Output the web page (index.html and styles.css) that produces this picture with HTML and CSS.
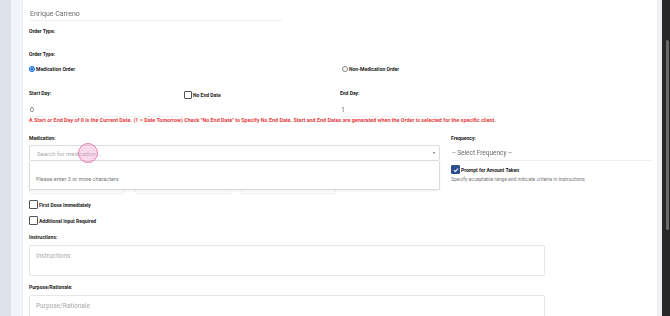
FILE: index.html
```html
<!DOCTYPE html>
<html lang="en">
<head>
  <meta charset="UTF-8">
  <meta name="viewport" content="width=device-width, initial-scale=1.0">
  <title>New Order</title>
  <link rel="stylesheet" href="styles.css">
</head>
<body>
  <div class="layout">
    <div class="sidebar"></div>
    <div class="gutter"></div>

    <div class="panel">
      <p class="label cut">Client Name:</p>
      <div class="line-input client">Enrique Carreno</div>

      <p class="label order-1">Order Type:</p>
      <p class="label order-2">Order Type:</p>

      <div class="half-grid radios">
        <label class="radio-item"><span class="radio on"></span>Medication Order</label>
        <label class="radio-item"><span class="radio"></span>Non-Medication Order</label>
      </div>

      <div class="half-grid days">
        <div class="day-start">
          <div>
            <p class="label">Start Day:</p>
            <div class="line-input day">0</div>
          </div>
          <label class="check-item no-end"><span class="box"></span>No End Date</label>
        </div>
        <div>
          <p class="label">End Day:</p>
          <div class="line-input day end">1</div>
        </div>
      </div>

      <p class="warning">A Start or End Day of 0 is the Current Date. (1 = Date Tomorrow) Check "No End Date" to Specify No End Date. Start and End Dates are generated when the Order is selected for the specific client.</p>

      <div class="med-grid">
        <div>
          <p class="label">Medication:</p>
          <div class="select-wrap">
            <div class="select">
              <span>Search for medication...</span>
              <span class="caret"></span>
            </div>
            <div class="menu">Please enter 3 or more characters</div>
            <span class="cursor"></span>
          </div>
          <div class="behind">
            <span></span><span></span><span></span>
          </div>
        </div>
        <div>
          <p class="label">Frequency:</p>
          <div class="line-input freq">-- Select Frequency --</div>
          <label class="check-item prompt"><span class="box checked">
            <svg viewBox="0 0 10 10" width="6" height="6"><path d="M1.5 5.2 L4 7.5 L8.5 2.5" fill="none" stroke="#fff" stroke-width="1.8"/></svg>
          </span>Prompt for Amount Taken</label>
          <p class="hint">Specify acceptable range and indicate criteria in Instructions</p>
        </div>
      </div>

      <label class="check-item first-dose"><span class="box"></span>First Dose Immediately</label>
      <label class="check-item extra"><span class="box"></span>Additional Input Required</label>

      <p class="label instr">Instructions:</p>
      <div class="textarea">Instructions</div>

      <p class="label purpose">Purpose/Rationale:</p>
      <div class="textarea">Purpose/Rationale</div>
    </div>

    <div class="edge"></div>
    <div class="scroll-track"><div class="thumb"></div></div>
  </div>
</body>
</html>
```

FILE: styles.css
```css
html, body {
  margin: 0;
  height: 316px;
  overflow: hidden;
}
body {
  font-family: Roboto, "Liberation Sans", Arial, sans-serif;
  color: #222;
}
p {
  margin: 0;
}
.layout {
  display: grid;
  grid-template-columns: 11px 11px 635px 5px 8px;
  width: 670px;
  height: 316px;
}
.sidebar {
  background: #dde1ea;
}
.gutter {
  background: #f4f5fa;
}
.panel {
  min-width: 0;
  overflow: hidden;
  position: relative;
  background: #fff;
  border-left: 1px solid #eceef4;
  padding: 0 0 0 6px;
}
.edge {
  background: #eef0f6;
}
.scroll-track {
  background: #262626;
  position: relative;
}
.thumb {
  position: absolute;
  top: 40px;
  left: 4px;
  width: 3px;
  height: 190px;
  background: #6a6a6a;
  border-radius: 2px;
}

.label {
  font-size: 5px;
  font-weight: 700;
  line-height: 8px;
  color: #222;
}
.label.cut {
  margin-top: -6px;
}
.line-input {
  font-size: 7px;
  color: #6a6a6a;
  line-height: 10px;
  border-bottom: 1px solid #eef0f3;
  filter: grayscale(1);
}
.line-input.client {
  width: 252px;
  padding: 7px 0 1px 1px;
}
.line-input.day {
  padding: 8px 0 1px 1px;
}
.order-1 {
  margin-top: 6px;
}
.order-2 {
  margin-top: 15px;
}

.half-grid {
  display: grid;
  grid-template-columns: 311px 312px;
}
.radios {
  margin-top: 7px;
  font-size: 5px;
  font-weight: 700;
  line-height: 8px;
}
.radio-item {
  display: flex;
  align-items: center;
  gap: 1px;
}
.radios .radio-item + .radio-item {
  margin-left: 2px;
}
.radio {
  width: 4px;
  height: 4px;
  border: 1px solid #888;
  border-radius: 50%;
  background: #fff;
}
.radio.on {
  border-color: #1a73e8;
  background: #1a73e8;
  box-shadow: inset 0 0 0 0.5px #fff;
}

.days {
  margin-top: 16px;
}
.day-start {
  display: grid;
  grid-template-columns: 155px 156px;
}
.line-input.end {
  width: 154px;
}

.check-item {
  display: flex;
  align-items: center;
  gap: 1px;
  font-size: 5px;
  font-weight: 700;
  line-height: 8px;
}
.box {
  width: 6px;
  height: 6px;
  border: 1px solid #555;
  border-radius: 1px;
  background: #fff;
  display: flex;
  align-items: center;
  justify-content: center;
}
.box.checked {
  background: #2d4f8f;
  border-color: #2d4f8f;
}
.no-end {
  align-self: start;
  margin-top: 2px;
}

.warning {
  margin-top: 0;
  font-size: 5.4px;
  font-weight: 700;
  line-height: 7px;
  color: #e53e3e;
  white-space: nowrap;
}

.med-grid {
  display: grid;
  grid-template-columns: 411px 201px;
  gap: 11px;
  margin-top: 10px;
}
.select-wrap {
  position: relative;
  margin-top: 3px;
  z-index: 2;
}
.select {
  height: 14px;
  border: 1px solid #d9dbe0;
  border-radius: 2px;
  display: flex;
  align-items: center;
  justify-content: space-between;
  padding: 0 4px 0 7px;
  font-size: 6px;
  color: #aaa;
}
.caret {
  width: 0;
  height: 0;
  border-left: 1.5px solid transparent;
  border-right: 1.5px solid transparent;
  border-top: 2px solid #666;
}
.menu {
  position: absolute;
  top: 16px;
  left: 0;
  right: 0;
  height: 21px;
  padding: 0 6px 7px;
  display: flex;
  align-items: flex-end;
  background: #fff;
  border: 1px solid #d9dbe0;
  border-top: none;
  border-radius: 0 0 2px 2px;
  box-shadow: 0 1px 2px rgba(0, 0, 0, 0.08);
  font-size: 5.5px;
  color: #777;
}
.cursor {
  position: absolute;
  left: 49px;
  top: -2px;
  width: 18px;
  height: 18px;
  border: 1px solid #e27fb5;
  border-radius: 50%;
  background: rgba(240, 160, 205, 0.4);
}
.behind {
  display: flex;
  gap: 11px;
  height: 33px;
}
.behind span {
  width: 93px;
  border: 1px solid #eef0f3;
  border-top: none;
  border-radius: 0 0 2px 2px;
}
.line-input.freq {
  padding: 6px 0 2px 1px;
  font-size: 6.5px;
}
.prompt {
  margin-top: 4px;
}
.prompt .box {
  width: 7px;
  height: 7px;
}
.hint {
  margin-top: 2px;
  font-size: 5px;
  line-height: 7px;
  color: #777;
}

.first-dose {
  margin-top: 6px;
}
.extra {
  margin-top: 7px;
}
.first-dose .box, .extra .box {
  width: 7px;
  height: 7px;
}
.instr {
  margin-top: 8px;
}
.purpose {
  margin-top: 7px;
}
.textarea {
  width: 502px;
  height: 19px;
  margin-top: 4px;
  padding: 6px 6px 4px;
  border: 1px solid #e4e6ea;
  border-radius: 2px;
  font-size: 6.5px;
  color: #aaa;
}
.purpose + .textarea {
  margin-top: 4px;
}
```
